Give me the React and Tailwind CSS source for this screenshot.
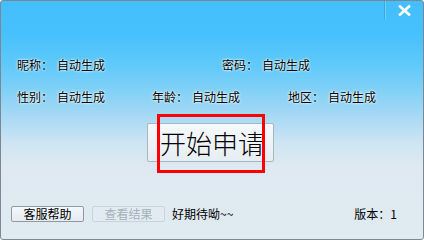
import React from 'react';

const glow = '[text-shadow:0_0_2px_#fff,0_0_3px_#fff]';

const Field = ({ label, width }) => (
    <div className={`flex items-center ${width}`}>
        <span className={`w-[40px] ${glow}`}>{label}：</span>
        <span className={glow}>自动生成</span>
    </div>
);

const App = () => {
    return (
        <div
            className="relative w-[424px] h-[240px] border border-[#7b8893] rounded-[3px] overflow-hidden text-[12px] leading-[16px] text-black bg-[linear-gradient(to_bottom,#44bffd_0%,#47c1fc_14%,#62cafa_28%,#9bd6f5_45%,#cfe5f3_60%,#dfe9f1_70%,#e0eaf1_100%)]"
            style={{ fontFamily: '"Noto Sans CJK SC", "Noto Sans", sans-serif' }}
        >
            {/* title bar */}
            <div className="flex justify-end h-[20px]">
                <div className="w-[1px] h-[18px] bg-[#3aa9e0]" />
                <div className="w-[1px] h-[18px] bg-[#6fd0fb]" />
                <button className="w-[37px] h-[18px] flex items-center justify-center">
                    <svg width="13" height="11" viewBox="0 0 13 11">
                        <path d="M2 1.5 L11 9.5 M11 1.5 L2 9.5" stroke="#fff" strokeWidth="2.6" strokeLinecap="square" />
                    </svg>
                </button>
            </div>

            {/* info rows */}
            <div className="pl-[16px] pt-[36px] flex">
                <Field label="昵称" width="w-[205px]" />
                <Field label="密码" width="" />
            </div>
            <div className="pl-[16px] pt-[16px] flex">
                <Field label="性别" width="w-[135px]" />
                <Field label="年龄" width="w-[136px]" />
                <Field label="地区" width="" />
            </div>

            {/* main button */}
            <div className="pt-[18px] pl-[146px]">
                <div className="relative w-[127px]">
                    <button className="w-[127px] h-[39px] rounded-[2px] border border-[#aab6be] bg-[linear-gradient(to_bottom,#f6f9fb,#e6eef3)] text-[26px] leading-[26px] font-light flex items-center pl-[12px]">
                        开始申请
                    </button>
                    <div className="absolute left-[10px] top-[-9px] w-[108px] h-[59px] border-[3px] border-[#ff0000]" />
                </div>
            </div>

            {/* bottom bar */}
            <div className="pt-[44px] pl-[10px] pr-[26px] flex items-center">
                <button className="w-[73px] h-[16px] rounded-[2px] border border-[#8f9aa2] bg-[linear-gradient(to_bottom,#f5f8fa,#e3ebf0)] flex items-center justify-center leading-[14px]">
                    客服帮助
                </button>
                <button
                    disabled
                    className="ml-[8px] w-[73px] h-[16px] rounded-[2px] border border-[#c8d3da] bg-[#e2ebf1] text-[#a4b1ba] flex items-center justify-center leading-[14px]"
                >
                    查看结果
                </button>
                <span className="ml-[7px]">好期待呦~~</span>
                <span className="ml-auto">版本：1</span>
            </div>
        </div>
    );
};

export default App;
